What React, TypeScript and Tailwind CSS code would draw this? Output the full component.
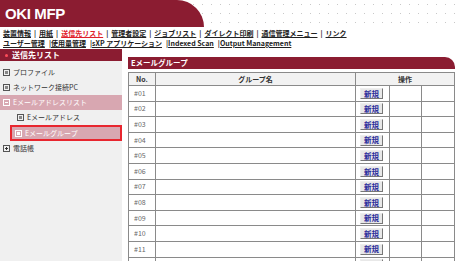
const navTop = [
  { t: '装置情報', red: false },
  { t: '用紙', red: false },
  { t: '送信先リスト', red: true },
  { t: '管理者設定', red: false },
  { t: 'ジョブリスト', red: false },
  { t: 'ダイレクト印刷', red: false },
  { t: '通信管理メニュー', red: false },
  { t: 'リンク', red: false },
];

const navBottom = ['ユーザー管理', '使用量管理', 'sXP アプリケーション', 'Indexed Scan', 'Output Management'];

const rows = Array.from({ length: 12 }, (_, i) => '#' + String(i + 1).padStart(2, '0'));

const Box = ({ kind = 'dot', light = false }: { kind?: 'dot' | 'minus' | 'plus'; light?: boolean }) => (
  <span
    className={`mr-[3px] inline-flex h-[7px] w-[7px] items-center justify-center border ${
      light ? 'border-white' : 'border-[#555]'
    }`}
  >
    {kind === 'dot' && <span className={`h-[3px] w-[3px] ${light ? 'bg-white' : 'bg-[#888]'}`} />}
    {kind === 'minus' && <span className={`h-[1px] w-[3px] ${light ? 'bg-white' : 'bg-[#333]'}`} />}
    {kind === 'plus' && (
      <span className="relative h-[3px] w-[3px]">
        <span className="absolute left-0 top-[1px] h-[1px] w-[3px] bg-[#333]" />
        <span className="absolute left-[1px] top-0 h-[3px] w-[1px] bg-[#333]" />
      </span>
    )}
  </span>
);

export default function App() {
  return (
    <div
      className="h-[261px] w-[460px] overflow-hidden bg-white text-[#222]"
      style={{ fontFamily: '"Noto Sans CJK JP", "Noto Sans", sans-serif' }}
    >
      {/* header */}
      <div className="flex h-[27px] bg-[radial-gradient(#c8c8c8_0.7px,transparent_0.8px)] bg-[size:9px_9px]">
        <div className="flex w-[204px] items-center rounded-tr-[28px] bg-[#8b1c31] pl-[5px]">
          <span className="text-[15px] font-bold leading-none tracking-tight text-white" style={{ fontFamily: '"Liberation Sans", Arial, sans-serif' }}>
            OKI MFP
          </span>
        </div>
      </div>

      {/* nav */}
      <div className="px-[3px] pt-[1px] text-[7px] font-bold leading-[10px]">
        <div className="flex whitespace-nowrap">
          {navTop.map((n, i) => (
            <span key={n.t} className="flex">
              {i > 0 && <span className="mx-[3px]">|</span>}
              <span className={`underline ${n.red ? 'text-[#e0202a]' : ''}`}>{n.t}</span>
            </span>
          ))}
        </div>
        <div className="flex whitespace-nowrap">
          {navBottom.map((n, i) => (
            <span key={n} className="flex">
              {i > 0 && <span className="ml-[4px]">|</span>}
              <span className="underline">{n}</span>
            </span>
          ))}
        </div>
      </div>

      <div className="mt-[1px] flex gap-[6px]">
        {/* sidebar */}
        <div className="flex h-[213px] w-[122px] flex-col bg-[#f0f0f0] text-[7px] leading-none text-[#333]">
          <div className="flex h-[12px] items-center bg-[#8b1c31] pl-[5px] text-[8px] font-bold text-white">
            <span className="mr-[4px] inline-block h-[3px] w-[3px] rounded-full bg-[#ff4d5a]" />
            送信先リスト
          </div>
          <div className="mt-[4px] flex h-[15px] items-center pl-[3px]">
            <Box />
            プロファイル
          </div>
          <div className="flex h-[15px] items-center pl-[3px]">
            <Box />
            ネットワーク接続PC
          </div>
          <div className="flex h-[15px] items-center bg-[#d8a7b1] pl-[3px] text-white">
            <Box kind="minus" light />
            Eメールアドレスリスト
          </div>
          <div className="flex h-[15px] items-center pl-[17px]">
            <Box />
            Eメールアドレス
          </div>
          <div className="ml-[10px] flex h-[16px] items-center border-2 border-[#e8262f] bg-[#d8a7b1] pl-[3px] text-white">
            <Box light />
            Eメールグループ
          </div>
          <div className="flex h-[15px] items-center pl-[3px]">
            <Box kind="plus" />
            電話帳
          </div>
        </div>

        {/* main */}
        <div className="mt-[8px] w-[327px]">
          <div className="flex h-[12px] items-center rounded-tr-[10px] bg-[#8b1c31] pl-[3px] text-[7.5px] font-bold text-white">
            Eメールグループ
          </div>
          <table className="mt-[3px] w-full border-collapse text-[7px] leading-none">
            <thead>
              <tr className="h-[13px] bg-[#f2f2f2] font-bold text-[#333]">
                <th className="w-[27px] border border-[#8a8a8a]">No.</th>
                <th className="border border-[#8a8a8a]">グループ名</th>
                <th colSpan={3} className="border border-[#8a8a8a]">操作</th>
              </tr>
            </thead>
            <tbody>
              {rows.map((r) => (
                <tr key={r} className="h-[15.6px]">
                  <td className="border border-[#8a8a8a] pl-[5px] text-[#666]">{r}</td>
                  <td className="border border-[#8a8a8a]" />
                  <td className="w-[34px] border border-[#8a8a8a] pl-[4px]">
                    <span className="inline-flex h-[11px] items-center border border-b-[#777] border-l-[#eee] border-r-[#777] border-t-[#eee] bg-[#e8e8e8] px-[3px] text-[7.5px] font-bold text-[#2a2a9a]">
                      新規
                    </span>
                  </td>
                  <td className="w-[32px] border border-[#8a8a8a]" />
                  <td className="w-[33px] border border-[#8a8a8a]" />
                </tr>
              ))}
            </tbody>
          </table>
        </div>
      </div>
    </div>
  );
}
